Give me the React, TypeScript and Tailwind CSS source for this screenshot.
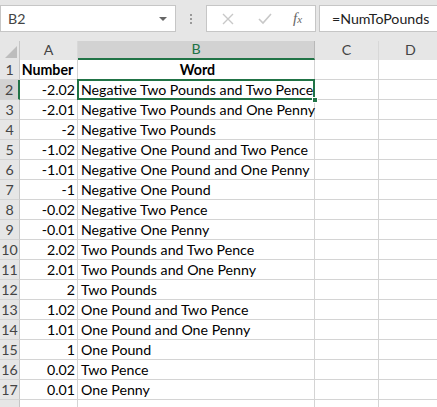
const rows: [string, string][] = [
  ['-2.02', 'Negative Two Pounds and Two Pence'],
  ['-2.01', 'Negative Two Pounds and One Penny'],
  ['-2', 'Negative Two Pounds'],
  ['-1.02', 'Negative One Pound and Two Pence'],
  ['-1.01', 'Negative One Pound and One Penny'],
  ['-1', 'Negative One Pound'],
  ['-0.02', 'Negative Two Pence'],
  ['-0.01', 'Negative One Penny'],
  ['2.02', 'Two Pounds and Two Pence'],
  ['2.01', 'Two Pounds and One Penny'],
  ['2', 'Two Pounds'],
  ['1.02', 'One Pound and Two Pence'],
  ['1.01', 'One Pound and One Penny'],
  ['1', 'One Pound'],
  ['0.02', 'Two Pence'],
  ['0.01', 'One Penny'],
]

const cols = 'grid grid-cols-[20px_58px_237px_64px_64px]'

export default function App() {
  return (
    <div className="w-[437px] h-[407px] overflow-hidden bg-white text-[14.2px] text-black whitespace-nowrap font-['Lato','Liberation_Sans',sans-serif]">
      {/* Formula bar */}
      <div className="h-[41px] bg-[#e6e6e6] flex items-start pt-[5px]">
        <div className="w-[176px] h-[27px] bg-white border border-[#c6c6c6] flex items-center justify-between pl-[7px] pr-[8px]">
          <span className="text-[#444]">B2</span>
          <span className="w-0 h-0 border-l-[4px] border-r-[4px] border-t-[4px] border-l-transparent border-r-transparent border-t-[#666]" />
        </div>
        <div className="w-[30px] h-[27px] flex flex-col items-center justify-center gap-[2px]">
          <span className="w-[2px] h-[2px] bg-[#999]" />
          <span className="w-[2px] h-[2px] bg-[#999]" />
          <span className="w-[2px] h-[2px] bg-[#999]" />
        </div>
        <div className="w-[110px] h-[27px] bg-white border border-[#c6c6c6] flex items-center">
          <svg className="ml-[15px]" width="12" height="12" viewBox="0 0 12 12" fill="none" stroke="#c8c8c8" strokeWidth="1.4">
            <path d="M1 1l10 10M11 1L1 11" />
          </svg>
          <svg className="ml-[24px]" width="14" height="12" viewBox="0 0 14 12" fill="none" stroke="#c8c8c8" strokeWidth="1.6">
            <path d="M1 6l4 4 8-9" />
          </svg>
          <span className="ml-[21px] text-[#666] italic font-['Liberation_Serif',serif] text-[15px] leading-none">
            f<span className="text-[11px]">x</span>
          </span>
        </div>
        <div className="ml-[3px] flex-1 h-[27px] bg-white border border-r-0 border-[#c6c6c6] flex items-center pl-[12px] text-[#222]">
          =NumToPounds
        </div>
      </div>

      {/* Column headers */}
      <div className={`${cols} h-[19px] bg-[#e6e6e6] text-[#444]`}>
        <div className="relative border-r border-[#c6c6c6]">
          <svg className="absolute right-[2px] bottom-[2px]" width="12" height="12" viewBox="0 0 12 12">
            <path d="M12 0V12H0Z" fill="#bdbdbd" />
          </svg>
        </div>
        <div className="border-r border-[#d8d8d8] flex items-center justify-center leading-none">A</div>
        <div className="bg-[#d2d2d2] border-r border-[#b8b8b8] border-b-2 border-b-[#217346] flex items-center justify-center leading-none text-[#217346]">B</div>
        <div className="border-r border-[#d8d8d8] flex items-center justify-center leading-none">C</div>
        <div className="border-r border-[#d8d8d8] flex items-center justify-center leading-none">D</div>
      </div>

      {/* Grid */}
      <div>
        <Row n={1} a={<span className="font-bold">Number</span>} b={<span className="font-bold">Word</span>} center />
        {rows.map((r, i) => (
          <Row key={i} n={i + 2} a={r[0]} b={r[1]} selected={i === 0} />
        ))}
        <Row n={18} a="" b="" />
      </div>
    </div>
  )
}

function Row({
  n,
  a,
  b,
  center,
  selected,
}: {
  n: number
  a: React.ReactNode
  b: React.ReactNode
  center?: boolean
  selected?: boolean
}) {
  return (
    <div className={`${cols} h-[20px] leading-none`}>
      <div
        className={`border-b border-[#d4d4d4] flex items-center justify-center pt-[2px] text-[#444] ${
          selected ? 'bg-[#d2d2d2] border-r-2 border-r-[#217346]' : 'bg-[#e6e6e6] border-r border-r-[#c6c6c6]'
        }`}
      >
        {n === 18 ? '' : n}
      </div>
      <div className={`border-b border-r border-[#d4d4d4] flex items-center pt-[2px] pr-[2px] ${center ? 'justify-center' : 'justify-end'}`}>
        {a}
      </div>
      <div className={`relative border-b border-r border-[#d4d4d4] flex items-center pt-[2px] pl-[3px] ${center ? 'justify-center' : ''}`}>
        {b}
        {selected && (
          <>
            <span className="absolute -left-[1px] -top-[1px] -right-[1px] -bottom-[1px] border-2 border-[#217346]" />
            <span className="absolute -right-[4px] -bottom-[4px] w-[6px] h-[6px] bg-[#217346] border border-white z-10" />
          </>
        )}
      </div>
      <div className="border-b border-r border-[#d4d4d4]" />
      <div className="border-b border-r border-[#d4d4d4]" />
    </div>
  )
}
